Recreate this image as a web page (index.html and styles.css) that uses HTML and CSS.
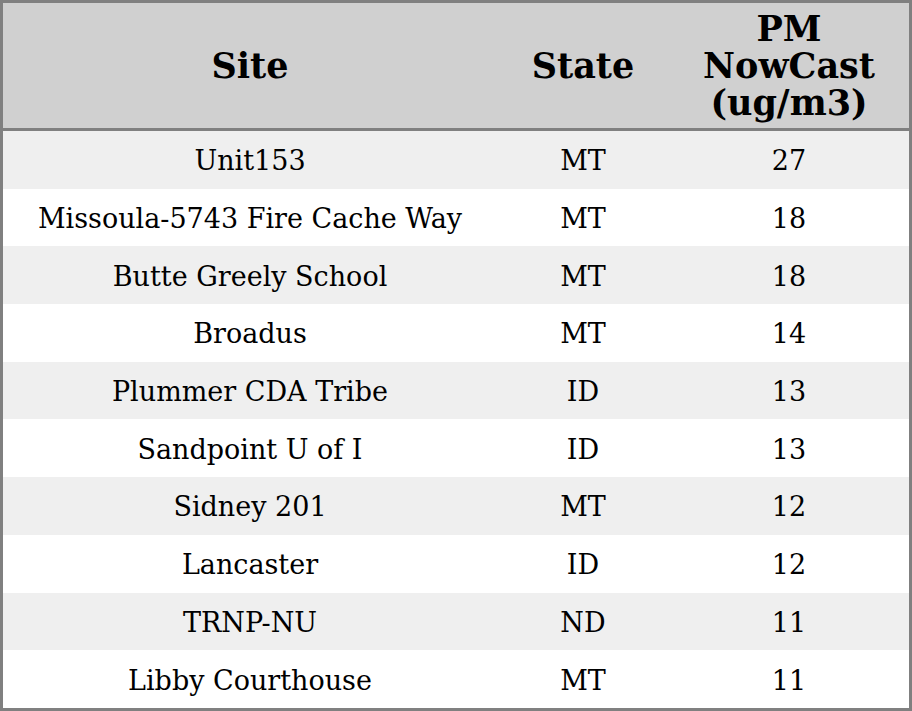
FILE: index.html
```html
<!DOCTYPE html>
<html>
<head>
<meta charset="utf-8">
<link rel="stylesheet" href="styles.css">
</head>
<body>
<table class="aq-table">
  <thead>
    <tr>
      <th class="col-site">Site</th>
      <th class="col-state">State</th>
      <th class="col-pm">PM<br>NowCast<br>(ug/m3)</th>
    </tr>
  </thead>
  <tbody>
    <tr><td>Unit153</td><td>MT</td><td>27</td></tr>
    <tr><td>Missoula-5743 Fire Cache Way</td><td>MT</td><td>18</td></tr>
    <tr><td>Butte Greely School</td><td>MT</td><td>18</td></tr>
    <tr><td>Broadus</td><td>MT</td><td>14</td></tr>
    <tr><td>Plummer CDA Tribe</td><td>ID</td><td>13</td></tr>
    <tr><td>Sandpoint U of I</td><td>ID</td><td>13</td></tr>
    <tr><td>Sidney 201</td><td>MT</td><td>12</td></tr>
    <tr><td>Lancaster</td><td>ID</td><td>12</td></tr>
    <tr><td>TRNP-NU</td><td>ND</td><td>11</td></tr>
    <tr><td>Libby Courthouse</td><td>MT</td><td>11</td></tr>
  </tbody>
</table>
</body>
</html>
```
FILE: styles.css
```css
html, body {
  margin: 0;
  padding: 0;
  background: #ffffff;
}
.aq-table {
  width: 912px;
  height: 711px;
  border-collapse: separate;
  border-spacing: 0;
  border: 3px solid #808080;
  font-family: "DejaVu Serif", serif;
  color: #000;
  table-layout: fixed;
}
.aq-table th {
  background: #d0d0d0;
  font-size: 35px;
  font-weight: bold;
  line-height: 37px;
  height: 128px;
  box-sizing: border-box;
  padding: 0;
  text-align: center;
  vertical-align: middle;
  border-bottom: 3px solid #808080;
}
.col-site { width: 494px; }
.col-state { width: 172px; }
.col-pm { width: 240px; }
.aq-table td {
  font-size: 27px;
  text-align: center;
  vertical-align: middle;
  padding: 2px 0 0;
  height: 57.7px;
  box-sizing: border-box;
}
.aq-table tbody tr:nth-child(odd) td {
  background: #efefef;
}
```
